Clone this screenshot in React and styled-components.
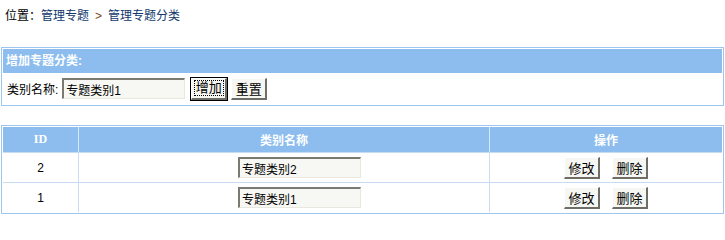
import React from "react";
import styled, { createGlobalStyle } from "styled-components";

const Global = createGlobalStyle`
  html, body { margin: 0; padding: 0; background: #fff; }
  body {
    font-family: "Liberation Sans", "Noto Sans CJK SC", sans-serif;
    font-size: 12px;
    color: #000;
  }
`;

const Page = styled.div`
  width: 723px;
  margin-left: 1px;
`;

const Crumb = styled.div`
  height: 32px;
  line-height: 32px;
  padding-left: 4px;
`;

const CrumbLink = styled.a`
  color: #10386c;
  text-decoration: none;
`;

const Arrow = styled.span`
  color: #7a4a1c;
  margin: 0 6px 0 6px;
`;

const Box = styled.div`
  margin-top: ${(p) => p.$top}px;
  border: 1px solid #9ec5ee;
  padding: 1px;
  background: #fff;
`;

const BoxHead = styled.div`
  height: 24px;
  line-height: 24px;
  background: #8cbdee;
  color: #fff;
  font-weight: bold;
  padding-left: 3px;
`;

const FormRow = styled.div`
  height: 31px;
  display: flex;
  align-items: center;
  padding-left: 4px;
`;

const Label = styled.span`
  margin-right: 4px;
`;

const TextInput = styled.input`
  box-sizing: border-box;
  width: 123px;
  height: 21px;
  padding: 1px 2px 0;
  font: inherit;
  color: #000;
  background: #f7f7f3;
  border-style: solid;
  border-width: 2px 1px 1px 2px;
  border-color: #7b7a72 #e9e8df #e9e8df #7b7a72;
  outline: none;
`;

const Button = styled.button`
  box-sizing: border-box;
  width: 36px;
  height: 22px;
  margin-left: ${(p) => p.$gap || 0}px;
  padding: 0;
  font: inherit;
  font-size: 13px;
  color: #000;
  background: #f6f6f2;
  border-style: solid;
  border-width: 1px 2px 2px 1px;
  border-color: #fff #6f6e66 #6f6e66 #fff;
  outline: ${(p) => (p.$focused ? "1px solid #000" : "none")};
  outline-offset: 0;
  display: inline-flex;
  align-items: center;
  justify-content: center;
`;

const FocusRing = styled.span`
  border: 1px dotted #000;
  padding: 0 1px;
  line-height: 14px;
`;

const Table = styled.table`
  width: 100%;
  border-collapse: collapse;
  border-spacing: 0;
`;

const Th = styled.th`
  height: 25px;
  padding: 0;
  background: #8cbdee;
  color: #fff;
  font-weight: bold;
  font-size: 12px;
  font-family: "Liberation Serif", "Noto Sans CJK SC", serif;
  border-right: 1px solid #d4e6f9;
  border-bottom: 1px solid #c7dcf3;
  width: ${(p) => p.$w}px;
  &:last-child { border-right: none; }
`;

const Td = styled.td`
  height: 29px;
  padding: 0 0 0 ${(p) => p.$pl || 0}px;
  text-align: center;
  vertical-align: middle;
  border-right: 1px solid #c7dcf3;
  border-bottom: 1px solid #c7dcf3;
  &:last-child { border-right: none; }
  tr:last-child > & { border-bottom: none; }
`;

const rows = [
  { id: 2, name: "专题类别2" },
  { id: 1, name: "专题类别1" },
];

export default function App() {
  return (
    <>
      <Global />
      <Page>
        <Crumb>
          位置：<CrumbLink href="#">管理专题</CrumbLink>
          <Arrow>&gt;</Arrow>
          <CrumbLink href="#">管理专题分类</CrumbLink>
        </Crumb>

        <Box $top={15}>
          <BoxHead>增加专题分类:</BoxHead>
          <FormRow>
            <Label>类别名称:</Label>
            <TextInput defaultValue="专题类别1" />
            <Button $gap={6} $focused>
              <FocusRing>增加</FocusRing>
            </Button>
            <Button $gap={4}>重置</Button>
          </FormRow>
        </Box>

        <Box $top={19}>
          <Table>
            <thead>
              <tr>
                <Th $w={75}>ID</Th>
                <Th $w={410}>类别名称</Th>
                <Th>操作</Th>
              </tr>
            </thead>
            <tbody>
              {rows.map((r) => (
                <tr key={r.id}>
                  <Td>{r.id}</Td>
                  <Td $pl={31}>
                    <TextInput defaultValue={r.name} />
                  </Td>
                  <Td>
                    <Button>修改</Button>
                    <Button $gap={12}>删除</Button>
                  </Td>
                </tr>
              ))}
            </tbody>
          </Table>
        </Box>
      </Page>
    </>
  );
}
